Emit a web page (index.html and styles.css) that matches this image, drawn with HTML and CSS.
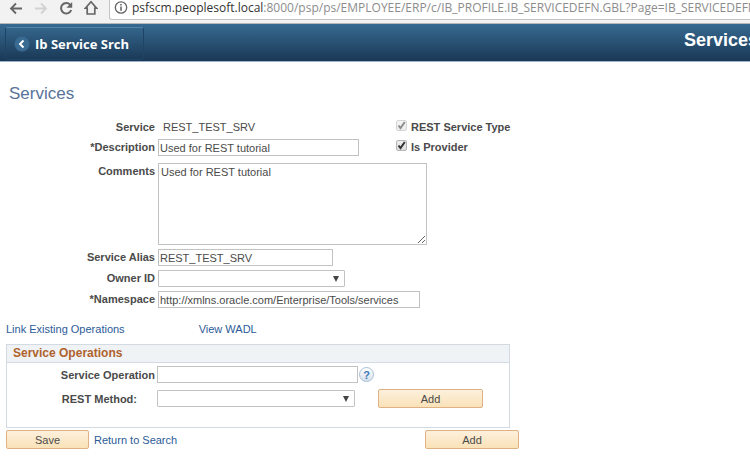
FILE: index.html
```html
<!DOCTYPE html>
<html lang="en">
<head>
    <meta charset="UTF-8">
    <meta name="viewport" content="width=device-width, initial-scale=1.0">
    <title>Services</title>
    <link rel="stylesheet" href="styles.css">
</head>
<body>

    <div class="toolbar">
        <button class="nav-btn" type="button" aria-label="Back">
            <svg width="14" height="14" viewBox="0 0 14 14"><path d="M13 7.5H2.5M7 2.5l-5 5 5 5" fill="none" stroke="#666" stroke-width="1.8"/></svg>
        </button>
        <button class="nav-btn" type="button" aria-label="Forward" disabled>
            <svg width="14" height="14" viewBox="0 0 14 14"><path d="M1 7.5h10.5M7 2.5l5 5-5 5" fill="none" stroke="#d2d2d2" stroke-width="1.8"/></svg>
        </button>
        <button class="nav-btn" type="button" aria-label="Reload">
            <svg width="14" height="14" viewBox="0 0 14 14"><path d="M11.2 3.8A5.2 5.2 0 1 0 12.2 9" fill="none" stroke="#666" stroke-width="2"/><path d="M13.2 1V6.8H7.4z" fill="#666"/></svg>
        </button>
        <button class="nav-btn" type="button" aria-label="Home">
            <svg width="14" height="15" viewBox="0 0 14 15"><path d="M7 1.8L1.4 8.2H3.2V14h7.6V8.2h1.8z" fill="none" stroke="#666" stroke-width="1.7"/></svg>
        </button>
        <div class="address">
            <svg width="14" height="14" viewBox="0 0 14 14"><circle cx="7" cy="7.5" r="5.7" fill="none" stroke="#666" stroke-width="1.3"/><path d="M7 6.5v4.2M7 4v1.5" stroke="#666" stroke-width="1.6"/></svg>
            <span class="url"><b>psfscm.peoplesoft.local</b>:8000/psp/ps/EMPLOYEE/ERP/c/IB_PROFILE.IB_SERVICEDEFN.GBL?Page=IB_SERVICEDEFN</span>
        </div>
    </div>

    <header class="banner">
        <button class="back" type="button">
            <svg width="16" height="16" viewBox="0 0 16 16"><circle cx="8" cy="8" r="7.5" fill="#386a92"/><path d="M9.5 4.5L6 8l3.5 3.5" fill="none" stroke="#fff" stroke-width="2"/></svg>
            Ib Service Srch
        </button>
        <span class="banner-title">Services</span>
    </header>

    <main>
        <h1>Services</h1>

        <form>
            <div class="fields">
                <span class="label">Service</span>
                <span class="value">REST_TEST_SRV</span>
                <label class="check disabled"><input type="checkbox" checked disabled>REST Service Type</label>

                <label class="label" for="description">*Description</label>
                <input class="text w-desc" type="text" id="description" value="Used for REST tutorial">
                <label class="check"><input type="checkbox" checked>Is Provider</label>

                <label class="label top" for="comments">Comments</label>
                <textarea class="wide" id="comments">Used for REST tutorial</textarea>

                <label class="label" for="alias">Service Alias</label>
                <input class="text w-alias wide" type="text" id="alias" value="REST_TEST_SRV">

                <label class="label" for="owner">Owner ID</label>
                <select class="w-owner wide" id="owner"><option></option></select>

                <label class="label" for="namespace">*Namespace</label>
                <input class="text w-space wide" type="text" id="namespace" value="http://xmlns.oracle.com/Enterprise/Tools/services">
            </div>

            <div class="links">
                <a href="#">Link Existing Operations</a>
                <a href="#">View WADL</a>
            </div>

            <section class="group">
                <h2>Service Operations</h2>
                <div class="operations">
                    <label class="label" for="operation">Service Operation</label>
                    <div class="with-help">
                        <input class="text w-desc" type="text" id="operation">
                        <button class="help" type="button">?</button>
                    </div>

                    <label class="label method" for="method">REST Method:</label>
                    <select id="method"><option></option></select>
                    <button class="btn btn-wide" type="button">Add</button>
                </div>
            </section>

            <div class="actions">
                <button class="btn" type="button">Save</button>
                <a href="#">Return to Search</a>
                <button class="btn add" type="button">Add</button>
            </div>
        </form>
    </main>

</body>
</html>
```

FILE: styles.css
```css
* {
    box-sizing: border-box;
}

body {
    margin: 0;
    background-color: #fff;
    color: #4a4a4a;
    font-family: "Liberation Sans", Arial, sans-serif;
    font-size: 11px;
    line-height: 16px;
    overflow-x: hidden;
}

button, input, select, textarea {
    font: inherit;
    color: inherit;
    margin: 0;
}

svg {
    display: block;
}

a {
    color: #2b5b98;
    text-decoration: none;
}

/* browser bar */
.toolbar {
    display: flex;
    gap: 11px;
    height: 24px;
    padding-left: 9px;
    background-color: #f2f2f2;
    border-bottom: 1px solid #b5b8ba;
}

.nav-btn {
    height: 15px;
    padding: 0;
    border: none;
    background: none;
}

.address {
    flex: 1;
    display: flex;
    gap: 4px;
    height: 20px;
    min-width: 0;
    padding-left: 4px;
    overflow: hidden;
    background-color: #fff;
    border-left: 1px solid #c4c4c4;
    border-bottom: 1px solid #c4c4c4;
    border-bottom-left-radius: 3px;
}

.address svg {
    flex-shrink: 0;
}

.url {
    font-family: "Open Sans", sans-serif;
    font-size: 12px;
    color: #8c8c8c;
    white-space: nowrap;
}

.url b {
    font-weight: normal;
    color: #333;
}

/* PeopleSoft header */
.banner {
    display: flex;
    justify-content: space-between;
    height: 38px;
    padding-left: 5px;
    color: #fff;
    font-weight: bold;
    background: linear-gradient(#376a91, #1a3855);
    border-bottom: 1px solid #9bb4cc;
    overflow: hidden;
}

.back {
    display: flex;
    align-items: center;
    gap: 5px;
    height: 33px;
    margin-top: 3px;
    padding: 0 14px 0 8px;
    font-family: "Open Sans", sans-serif;
    font-size: 13px;
    background: linear-gradient(#34658b, #1b3a58);
    border: 1px solid #1f4566;
    border-top-color: #5484a8;
    border-radius: 3px;
}

.banner-title {
    margin-right: -8px;
    font-size: 18px;
    line-height: 32px;
}

/* page */
main {
    padding: 20px 6px;
}

h1 {
    margin: 0 0 13px 3px;
    font-size: 17px;
    line-height: 24px;
    font-weight: normal;
    color: #587299;
}

.fields {
    display: grid;
    grid-template-columns: 149px 235px 1fr;
    column-gap: 3px;
    row-gap: 4px;
}

.label {
    font-weight: bold;
    text-align: right;
    white-space: nowrap;
}

.value {
    padding-left: 5px;
}

.wide {
    grid-column: 2 / 4;
}

.text, select, textarea {
    height: 17px;
    padding: 0 1px;
    background-color: #fff;
    border: 1px solid #c2c2c2;
    border-radius: 0;
}

textarea {
    width: 269px;
    height: 82px;
    margin-top: 3px;
    padding: 0 2px;
    resize: both;
}

.top {
    padding-top: 3px;
}

select {
    appearance: none;
    background: #fff url("data:image/svg+xml,%3Csvg xmlns='http://www.w3.org/2000/svg' width='6' height='6'%3E%3Cpath d='M0 0h6L3 6z' fill='%23444'/%3E%3C/svg%3E") no-repeat right 5px center;
    border-radius: 1px;
}

.w-desc {
    width: 201px;
}

.w-alias {
    width: 175px;
}

.w-owner {
    width: 187px;
}

.w-space {
    width: 262px;
}

.check {
    display: flex;
    align-items: flex-start;
    gap: 4px;
    font-weight: bold;
}

.check input {
    appearance: none;
    width: 11px;
    height: 11px;
    margin-top: 1px;
    background: url("data:image/svg+xml,%3Csvg xmlns='http://www.w3.org/2000/svg' viewBox='0 0 9 9'%3E%3Cpath d='M1.5 4.5l2 2.5L7.8 1' fill='none' stroke='%23333' stroke-width='2'/%3E%3C/svg%3E") center / 9px 9px no-repeat, linear-gradient(#eee, #ddd);
    border: 1px solid #b5b5b5;
    border-radius: 2px;
}

.disabled input {
    opacity: 0.55;
}

.links {
    display: flex;
    gap: 74px;
    margin-top: 13px;
}

.group {
    max-width: 504px;
    height: 84px;
    margin-top: 7px;
    border: 1px solid #d3dae2;
}

h2 {
    margin: 0;
    padding-left: 6px;
    font-size: 12px;
    line-height: 17px;
    color: #b0622e;
    background-color: #eff3f5;
    border-bottom: 1px solid #d3dae2;
}

.operations {
    display: grid;
    grid-template-columns: 148px 198px 1fr;
    column-gap: 2px;
    row-gap: 6px;
    align-items: center;
    padding-top: 3px;
}

.with-help {
    grid-column: 2 / 4;
    display: flex;
    align-items: center;
    gap: 1px;
}

.help {
    width: 15px;
    height: 15px;
    padding: 0;
    font-weight: bold;
    line-height: 12px;
    color: #4279b8;
    background: linear-gradient(#fff, #d5e0ea);
    border: 1px solid #a9bfd6;
    border-radius: 50%;
}

.method {
    padding-right: 18px;
}

.btn {
    width: 83px;
    height: 19px;
    padding: 0;
    line-height: 16px;
    background: linear-gradient(#fdf0dc, #fae2b8);
    border: 1px solid #e0b184;
    border-radius: 2px;
}

.btn-wide {
    width: 105px;
    margin-left: 21px;
}

.actions {
    display: flex;
    align-items: center;
    gap: 5px;
    max-width: 513px;
    margin-top: 2px;
}

.add {
    width: 94px;
    margin-left: auto;
}
```
